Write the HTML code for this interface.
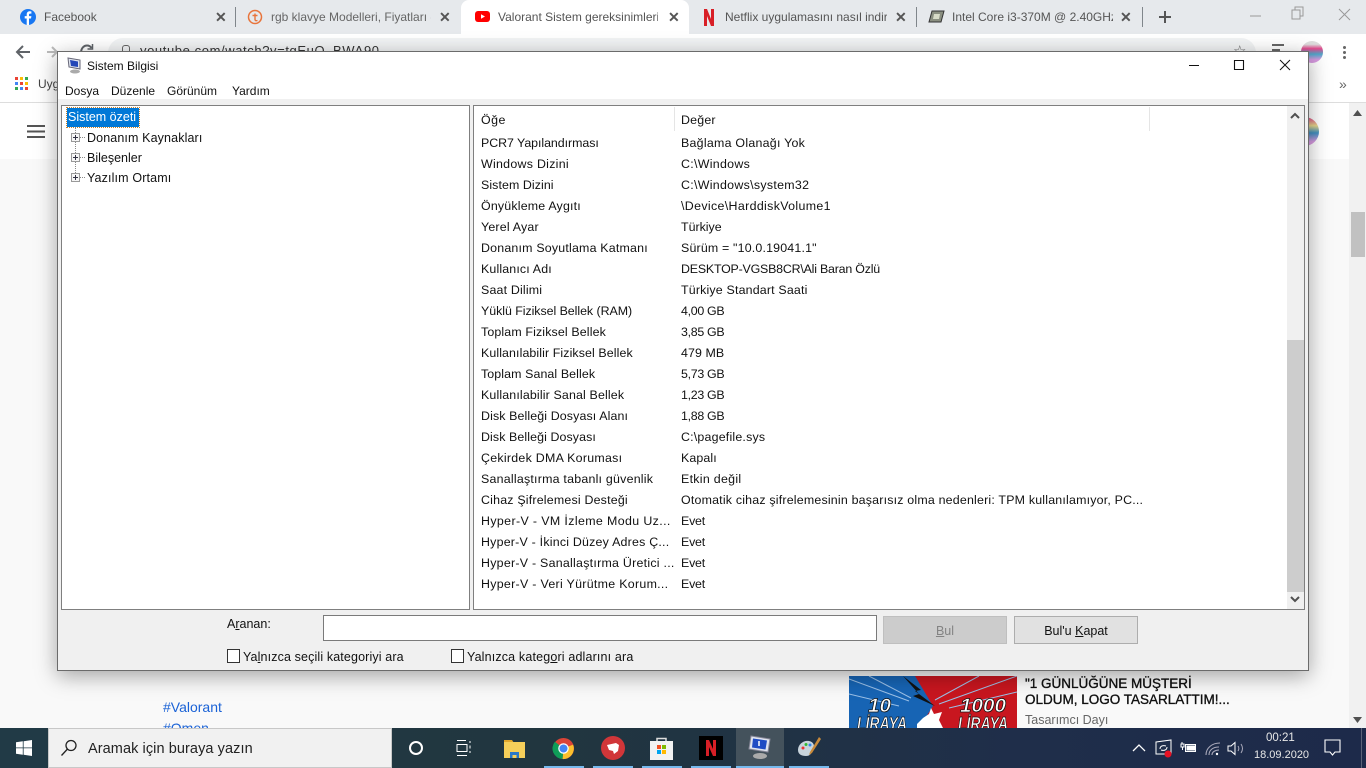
<!DOCTYPE html>
<html lang="tr"><head><meta charset="utf-8"><title>Sistem Bilgisi</title>
<style>
html,body{margin:0;padding:0;width:1366px;height:768px;overflow:hidden;background:#f9f9f9}
body{font-family:"Liberation Sans",sans-serif;font-size:12.5px;color:#111;position:relative}
.a{position:absolute;white-space:nowrap}
.t{line-height:16px}
.tab{font-size:12px;color:#555;line-height:16px}
.x{font-size:14px;color:#555;line-height:16px;font-weight:bold}
.sep{position:absolute;width:1px;height:20px;top:7px;background:#80868b}
.r{position:absolute;left:481px;margin-top:1px;line-height:16px;white-space:nowrap;font-size:12.4px;letter-spacing:.15px}
.v{position:absolute;left:681px;margin-top:1px;line-height:16px;white-space:nowrap;font-size:12.4px;letter-spacing:.2px}
.pl{position:absolute;left:71px;width:9px;height:9px;box-sizing:border-box;border:1px solid #9a9a9a;background:#f6f6f6}
.pl:before{content:"";position:absolute;left:1px;top:3px;width:5px;height:1px;background:#334}
.pl:after{content:"";position:absolute;left:3px;top:1px;width:1px;height:5px;background:#334}
u{text-decoration:underline}
</style></head><body>

<!-- Chrome -->
<div class="a" style="left:0;top:0;width:1366px;height:34px;background:#e6e9ec"></div>
<div class="a" style="left:461px;top:0;width:228px;height:34px;background:#fff;border-radius:8px 8px 0 0"></div>
<div class="a" style="left:0;top:34px;width:1366px;height:68px;background:#fff"></div>
<div class="a" style="left:0;top:102px;width:1366px;height:1px;background:#ddd"></div>
<div class="a" style="left:0;top:103px;width:1349px;height:56px;background:#fff"></div>
<div class="a" style="left:108px;top:38px;width:1148px;height:30px;border-radius:15px;background:#f1f3f4"></div>

<svg class="a" style="left:20px;top:8px" width="16" height="18" viewBox="0 0 16 18"><circle cx="8" cy="9" r="8" fill="#1877f2"/><path d="M9 17V10.500h2l.4-2.400H9V6.800c0-.8.3-1.200 1.200-1.200h1.200V3.500C11 3.400 10.300 3.300 9.700 3.300 7.900 3.300 6.700 4.400 6.700 6.500v1.600H4.700v2.400h2V17z" fill="#fff"/></svg>
<div class="a tab" style="left:44px;top:9px">Facebook</div>
<div class="a x" style="left:215px;top:9px">✕</div>
<div class="sep" style="left:235px"></div>
<svg class="a" style="left:247px;top:9px" width="16" height="16" viewBox="0 0 16 16"><circle cx="8" cy="8" r="6.500" fill="none" stroke="#e8743b" stroke-width="1.500"/><path d="M5.500 6.500h5M8 4.500v6c0 1 .8 1.500 2.500 1" fill="none" stroke="#e8743b" stroke-width="1.400"/></svg>
<div class="a tab" style="left:271px;top:9px;width:160px;overflow:hidden;color:#666">rgb klavye Modelleri, Fiyatları -</div>
<div class="a x" style="left:439px;top:9px">✕</div>
<svg class="a" style="left:475px;top:10px" width="15" height="14" viewBox="0 0 15 14"><rect x="0" y="1" width="15" height="11" rx="3" fill="#f00"/><path d="M6 4.200l4 2.300-4 2.300z" fill="#fff"/></svg>
<div class="a tab" style="left:498px;top:9px;width:160px;overflow:hidden">Valorant Sistem gereksinimleri</div>
<div class="a x" style="left:668px;top:9px">✕</div>
<svg class="a" style="left:703px;top:9px" width="12" height="17" viewBox="0 0 12 17"><path d="M1 0h3l4 10V0h3v17H8L4 7v10H1z" fill="#d81f26"/></svg>
<div class="a tab" style="left:725px;top:9px;width:162px;overflow:hidden">Netflix uygulamasını nasıl indir</div>
<div class="a x" style="left:895px;top:9px">✕</div>
<div class="sep" style="left:916px"></div>
<svg class="a" style="left:928px;top:9px" width="17" height="16" viewBox="0 0 17 16"><path d="M4 2h12l-3 11H1z" fill="#8a8f80" stroke="#333"/><path d="M6 5h6l-1 5H5z" fill="#d8dcc8"/></svg>
<div class="a tab" style="left:952px;top:9px;width:161px;overflow:hidden">Intel Core i3-370M @ 2.40GHz</div>
<div class="a x" style="left:1120px;top:9px">✕</div>
<div class="sep" style="left:1142px"></div>
<svg class="a" style="left:1158px;top:10px" width="14" height="14" viewBox="0 0 14 14"><path d="M7 1v12M1 7h12" stroke="#555" stroke-width="2"/></svg>
<svg class="a" style="left:1240px;top:3px" width="120" height="20" viewBox="0 0 120 20" fill="none" stroke="#999"><path d="M10 13h11"/><path d="M52 7h8v9h-8zM55 7V4h8v9h-3"/><path d="M99 7l11 11M110 7L99 18" transform="translate(0 -1)"/></svg>

<svg class="a" style="left:14px;top:44px" width="18" height="16" viewBox="0 0 18 16" fill="none" stroke="#5f6368" stroke-width="2"><path d="M16 8H3M9 2L3 8l6 6"/></svg>
<svg class="a" style="left:47px;top:44px" width="12" height="16" viewBox="0 0 12 16" fill="none" stroke="#bbb" stroke-width="2"><path d="M0 8h10M5 3l5 5-5 5"/></svg>
<svg class="a" style="left:79px;top:43px" width="16" height="14" viewBox="0 0 16 14" fill="none" stroke="#5f6368" stroke-width="2"><path d="M2 10C2 5 5 2.500 8 2.500c2 0 3.500 1 4.500 2.500"/><path d="M13.500 1v5h-5" stroke-width="1.500"/></svg>
<div class="a" style="left:122px;top:45px;width:6px;height:6px;border:1px solid #666;border-radius:3px 3px 0 0"></div>
<div class="a" style="left:140px;top:43px;font-size:13px;color:#333;letter-spacing:.6px">youtube.com/watch?v=tgEuQ_BWA90</div>
<div class="a" style="left:1233px;top:42px;font-size:15px;color:#666">☆</div>
<svg class="a" style="left:1272px;top:44px" width="16" height="8"><path d="M0 1h12M0 6h8" stroke="#666" stroke-width="2"/></svg>
<div class="a" style="left:1301px;top:41px;width:22px;height:22px;border-radius:50%;background:linear-gradient(180deg,#ddd 15%,#e04a8c 35%,#4fa7c9 60%,#d79ae0 85%)"></div>
<div class="a" style="left:1343px;top:46px;width:3px;height:3px;background:#666;border-radius:50%;box-shadow:0 5px #666,0 10px #666"></div>
<svg class="a" style="left:15px;top:77px" width="14" height="14"><g fill="#ea4335"><rect width="3" height="3"/><rect x="5" width="3" height="3" fill="#fbbc04"/><rect x="10" width="3" height="3" fill="#34a853"/><rect y="5" width="3" height="3" fill="#4285f4"/><rect x="5" y="5" width="3" height="3"/><rect x="10" y="5" width="3" height="3" fill="#fbbc04"/><rect y="10" width="3" height="3" fill="#34a853"/><rect x="5" y="10" width="3" height="3" fill="#4285f4"/><rect x="10" y="10" width="3" height="3"/></g></svg>
<div class="a" style="left:38px;top:77px;font-size:12px;color:#444">Uygulamalar</div>
<div class="a" style="left:1339px;top:76px;font-size:14px;color:#666">»</div>
<svg class="a" style="left:27px;top:125px" width="18" height="13"><path d="M0 1h18M0 6.500h18M0 12h18" stroke="#555" stroke-width="2"/></svg>
<div class="a" style="left:1298px;top:117px;width:21px;height:29px;border-radius:0 15px 15px 0;background:linear-gradient(180deg,#e04a8c,#e8d88c 30%,#3f8fc0 55%,#d79ae0 85%)"></div>

<!-- page scrollbar -->
<div class="a" style="left:1349px;top:103px;width:17px;height:625px;background:#f1f1f1"></div>
<div class="a" style="left:1351px;top:212px;width:14px;height:45px;background:#c1c1c1"></div>
<svg class="a" style="left:1353px;top:110px" width="9" height="6"><path d="M4.500 0L9 6H0z" fill="#505050"/></svg>
<svg class="a" style="left:1353px;top:717px" width="9" height="6"><path d="M4.500 6L9 0H0z" fill="#505050"/></svg>

<!-- page content under window -->
<div class="a" style="left:163px;top:699px;font-size:14px;color:#1a62d6">#Valorant</div>
<div class="a" style="left:163px;top:720px;font-size:14px;color:#1a62d6">#Omen</div>
<svg class="a" style="left:849px;top:676px" width="168" height="52" viewBox="0 0 168 52"><rect width="168" height="52" fill="#c8161f"/><path d="M0 0H66L84 30 70 52H0z" fill="#1764b4"/><path d="M0 3L60 25M0 18L50 30M20 0L62 22M168 0L90 28M168 16L100 32M130 0L86 24" stroke="#9cc0e6" stroke-width="1"/><path d="M54 0L72 14 66 15 86 30 64 20 70 18z" fill="#111"/><path d="M68 48l6-6 6-4 2-6 3 6 8-2-3 8 4 8H68z" fill="#fff"/><text x="19" y="36" font-family="Liberation Sans" font-size="19" font-weight="bold" font-style="italic" fill="#fff" stroke="#111" stroke-width=".7" textLength="23" lengthAdjust="spacingAndGlyphs">10</text><text x="111" y="36" font-family="Liberation Sans" font-size="19" font-weight="bold" font-style="italic" fill="#fff" stroke="#111" stroke-width=".7" textLength="46" lengthAdjust="spacingAndGlyphs">1000</text><text x="8" y="54" font-family="Liberation Sans" font-size="18" font-weight="bold" font-style="italic" fill="#fff" stroke="#111" stroke-width=".7" textLength="50" lengthAdjust="spacingAndGlyphs">LİRAYA</text><text x="109" y="54" font-family="Liberation Sans" font-size="18" font-weight="bold" font-style="italic" fill="#fff" stroke="#111" stroke-width=".7" textLength="50" lengthAdjust="spacingAndGlyphs">LİRAYA</text></svg>
<div class="a" style="left:1025px;top:676px;font-size:13.500px;line-height:16px;color:#111;-webkit-text-stroke:.35px #111">"1 GÜNLÜĞÜNE MÜŞTERİ<br>OLDUM, LOGO TASARLATTIM!...</div>
<div class="a" style="left:1025px;top:713px;font-size:12.500px;color:#666">Tasarımcı Dayı</div>

<!-- Window -->
<div class="a" style="left:57px;top:51px;width:1250px;height:618px;background:#f0f0f0;border:1px solid #6b6b6b;box-shadow:0 5px 20px rgba(0,0,0,.35)"></div>
<div class="a" style="left:58px;top:52px;width:1250px;height:47px;background:#fff"></div>
<svg class="a" style="left:66px;top:57px" width="17" height="17" viewBox="0 0 17 17"><path d="M2 1l12 2v9L3 10z" fill="#dfe4ee" stroke="#667"/><path d="M4 3l8 1.500v5.500L5 9z" fill="#2447b8"/><ellipse cx="9" cy="14.500" rx="5" ry="2" fill="#aaa"/></svg>
<div class="a t" style="left:87px;top:58px;font-size:12px">Sistem Bilgisi</div>
<svg class="a" style="left:1180px;top:55px" width="115" height="20" viewBox="0 0 115 20" fill="none" stroke="#111"><path d="M9 10.500h10"/><path d="M54.500 5.500h9v9h-9z" stroke-width="1.100"/><path d="M100 5l10 10M110 5l-10 10"/></svg>
<div class="a t" style="left:65px;top:83px;font-size:12px">Dosya</div>
<div class="a t" style="left:111px;top:83px;font-size:12px">Düzenle</div>
<div class="a t" style="left:167px;top:83px;font-size:12px">Görünüm</div>
<div class="a t" style="left:232px;top:83px;font-size:12px">Yardım</div>

<!-- Tree panel -->
<div class="a" style="left:61px;top:105px;width:407px;height:503px;background:#fff;border:1px solid #7f7f7f"></div>
<div class="a t" style="left:67px;top:108px;width:71px;height:19px;line-height:19px;background:#0078d7;color:#fff;outline:1px dotted #c9812a;padding-left:1px;font-size:12.500px">Sistem özeti</div>
<div class="a" style="left:75px;top:127px;height:50px;border-left:1px dotted #888"></div>
<div class="a" style="left:80px;top:137px;width:5px;border-top:1px dotted #888"></div>
<div class="a" style="left:80px;top:157px;width:5px;border-top:1px dotted #888"></div>
<div class="a" style="left:80px;top:177px;width:5px;border-top:1px dotted #888"></div>
<div class="pl" style="top:133px"></div><div class="pl" style="top:153px"></div><div class="pl" style="top:173px"></div>
<div class="a t" style="left:87px;top:130px;letter-spacing:.12px">Donanım Kaynakları</div>
<div class="a t" style="left:87px;top:150px">Bileşenler</div>
<div class="a t" style="left:87px;top:170px;letter-spacing:.14px">Yazılım Ortamı</div>

<!-- List panel -->
<div class="a" style="left:473px;top:105px;width:830px;height:503px;background:#fff;border:1px solid #7f7f7f"></div>
<div class="a" style="left:674px;top:107px;width:1px;height:24px;background:#e5e5e5"></div>
<div class="a" style="left:1149px;top:107px;width:1px;height:24px;background:#e5e5e5"></div>
<div class="a" style="left:1287px;top:106px;width:17px;height:503px;background:#f0f0f0"></div>
<div class="a" style="left:1287px;top:340px;width:17px;height:252px;background:#cdcdcd"></div>
<svg class="a" style="left:1290px;top:112px" width="10" height="7" fill="none" stroke="#505050" stroke-width="2"><path d="M1 6l4-4 4 4"/></svg>
<svg class="a" style="left:1290px;top:596px" width="10" height="7" fill="none" stroke="#505050" stroke-width="2"><path d="M1 1l4 4 4-4"/></svg>
<div class="r" style="top:111px;letter-spacing:.5px">Öğe</div><div class="v" style="top:111px">Değer</div>
<div class="r" style="top:134px;letter-spacing:-.05px">PCR7 Yapılandırması</div><div class="v" style="top:134px;letter-spacing:.26px">Bağlama Olanağı Yok</div>
<div class="r" style="top:155px;letter-spacing:.28px">Windows Dizini</div><div class="v" style="top:155px;letter-spacing:.3px">C:\Windows</div>
<div class="r" style="top:176px;letter-spacing:.08px">Sistem Dizini</div><div class="v" style="top:176px;letter-spacing:.3px">C:\Windows\system32</div>
<div class="r" style="top:197px;letter-spacing:.19px">Önyükleme Aygıtı</div><div class="v" style="top:197px;letter-spacing:.35px">\Device\HarddiskVolume1</div>
<div class="r" style="top:218px;letter-spacing:.2px">Yerel Ayar</div><div class="v" style="top:218px;letter-spacing:0">Türkiye</div>
<div class="r" style="top:239px;letter-spacing:.2px">Donanım Soyutlama Katmanı</div><div class="v" style="top:239px;letter-spacing:.18px">Sürüm = "10.0.19041.1"</div>
<div class="r" style="top:260px">Kullanıcı Adı</div><div class="v" style="top:260px;letter-spacing:-.2px">DESKTOP-VGSB8CR\Ali Baran Özlü</div>
<div class="r" style="top:281px;letter-spacing:.18px">Saat Dilimi</div><div class="v" style="top:281px;letter-spacing:.18px">Türkiye Standart Saati</div>
<div class="r" style="top:302px;letter-spacing:-.04px">Yüklü Fiziksel Bellek (RAM)</div><div class="v" style="top:302px;letter-spacing:-.3px">4,00 GB</div>
<div class="r" style="top:323px;letter-spacing:.14px">Toplam Fiziksel Bellek</div><div class="v" style="top:323px;letter-spacing:-.3px">3,85 GB</div>
<div class="r" style="top:344px;letter-spacing:.1px">Kullanılabilir Fiziksel Bellek</div><div class="v" style="top:344px;letter-spacing:.1px">479 MB</div>
<div class="r" style="top:365px;letter-spacing:.1px">Toplam Sanal Bellek</div><div class="v" style="top:365px;letter-spacing:-.3px">5,73 GB</div>
<div class="r" style="top:386px">Kullanılabilir Sanal Bellek</div><div class="v" style="top:386px;letter-spacing:-.3px">1,23 GB</div>
<div class="r" style="top:407px;letter-spacing:.12px">Disk Belleği Dosyası Alanı</div><div class="v" style="top:407px;letter-spacing:-.3px">1,88 GB</div>
<div class="r" style="top:428px;letter-spacing:.1px">Disk Belleği Dosyası</div><div class="v" style="top:428px">C:\pagefile.sys</div>
<div class="r" style="top:449px;letter-spacing:.27px">Çekirdek DMA Koruması</div><div class="v" style="top:449px;letter-spacing:.1px">Kapalı</div>
<div class="r" style="top:470px;letter-spacing:.23px">Sanallaştırma tabanlı güvenlik</div><div class="v" style="top:470px;letter-spacing:.3px">Etkin değil</div>
<div class="r" style="top:491px;letter-spacing:.2px">Cihaz Şifrelemesi Desteği</div><div class="v" style="top:491px">Otomatik cihaz şifrelemesinin başarısız olma nedenleri: TPM kullanılamıyor, PC...</div>
<div class="r" style="top:512px;letter-spacing:.38px">Hyper-V - VM İzleme Modu Uz...</div><div class="v" style="top:512px;letter-spacing:-.2px">Evet</div>
<div class="r" style="top:533px;letter-spacing:.22px">Hyper-V - İkinci Düzey Adres Ç...</div><div class="v" style="top:533px;letter-spacing:-.2px">Evet</div>
<div class="r" style="top:554px;letter-spacing:.26px">Hyper-V - Sanallaştırma Üretici ...</div><div class="v" style="top:554px;letter-spacing:-.2px">Evet</div>
<div class="r" style="top:575px;letter-spacing:.3px">Hyper-V - Veri Yürütme Korum...</div><div class="v" style="top:575px;letter-spacing:-.2px">Evet</div>

<!-- Search -->
<div class="a t" style="left:227px;top:616px">A<u>r</u>anan:</div>
<div class="a" style="left:323px;top:615px;width:552px;height:24px;background:#fff;border:1px solid #7a7a7a"></div>
<div class="a" style="left:883px;top:616px;width:122px;height:26px;background:#ccc;border:1px solid #bfbfbf;text-align:center;line-height:28px;color:#838383"><u>B</u>ul</div>
<div class="a" style="left:1014px;top:616px;width:122px;height:26px;background:#e1e1e1;border:1px solid #adadad;text-align:center;line-height:28px">Bul'u <u>K</u>apat</div>
<div class="a" style="left:227px;top:649px;width:11px;height:12px;background:#fff;border:1px solid #333"></div>
<div class="a t" style="left:243px;top:649px;letter-spacing:.13px">Ya<u>l</u>nızca seçili kategoriyi ara</div>
<div class="a" style="left:451px;top:649px;width:11px;height:12px;background:#fff;border:1px solid #333"></div>
<div class="a t" style="left:467px;top:649px;letter-spacing:.16px">Yalnızca kateg<u>o</u>ri adlarını ara</div>

<!-- Taskbar -->
<div class="a" style="left:0;top:728px;width:1366px;height:40px;background:linear-gradient(90deg,#213a46 0%,#21363f 40%,#1f2e4a 75%,#1d2a4a 100%)"></div>
<svg class="a" style="left:16px;top:740px" width="16" height="16" viewBox="0 0 16 16" fill="#fff"><path d="M0 2.300l6.800-1V7.500H0zM7.600 1.200L16 0V7.500H7.600zM0 8.300h6.800v6.400l-6.800-1zM7.600 8.300H16V16L7.600 14.800z"/></svg>
<div class="a" style="left:48px;top:728px;width:344px;height:40px;box-sizing:border-box;background:#f1f1f1;border:1px solid #c8c8c8"></div>
<svg class="a" style="left:60px;top:739px" width="18" height="18" viewBox="0 0 18 18" fill="none" stroke="#222" stroke-width="1.300"><circle cx="11" cy="6.500" r="5"/><path d="M7.500 10L1.500 16.500"/></svg>
<div class="a" style="left:88px;top:741px;font-size:14.500px;color:#222;letter-spacing:.08px">Aramak için buraya yazın</div>
<div class="a" style="left:409px;top:741px;width:10px;height:10px;border:2px solid #fff;border-radius:50%"></div>
<svg class="a" style="left:455px;top:740px" width="17" height="16" fill="none" stroke="#fff"><path d="M2 .5h9M2 4.500h10v7H2zM2 15.500h10M15 1v2M15 5.500v3M15 11v2"/></svg>
<svg class="a" style="left:504px;top:739px" width="21" height="19" viewBox="0 0 21 19"><path d="M0 1h8l2 3H0z" fill="#e2a72c"/><rect y="3" width="21" height="16" fill="#f6cf5a"/><path d="M6 19v-6h9v6h-2.500v-3h-4v3z" fill="#2a78c8"/></svg>
<svg class="a" style="left:552px;top:737px" width="23" height="23" viewBox="0 0 24 24"><circle cx="12" cy="12" r="11" fill="#db4437"/><path d="M12 12L22 8A11 11 0 0 1 11 23z" fill="#fbc02d"/><path d="M12 12L11 23A11 11 0 0 1 3 5z" fill="#0f9d58"/><circle cx="12" cy="12" r="5.500" fill="#fff"/><circle cx="12" cy="12" r="4.200" fill="#4285f4"/></svg>
<svg class="a" style="left:601px;top:736px" width="24" height="24" viewBox="0 0 24 24"><circle cx="12" cy="12" r="12" fill="#d13639"/><path d="M6 9l9-2 3 2-1 6-4 3-1-3-4-1z" fill="#fff"/></svg>
<svg class="a" style="left:650px;top:736px" width="23" height="24" viewBox="0 0 23 24"><path d="M7 6V2.500h9V6" fill="none" stroke="#ddd" stroke-width="1.500"/><rect y="5" width="23" height="19" fill="#f2f2f2"/><rect x="7" y="9" width="4" height="4" fill="#f25022"/><rect x="12" y="9" width="4" height="4" fill="#7fba00"/><rect x="7" y="14" width="4" height="4" fill="#00a4ef"/><rect x="12" y="14" width="4" height="4" fill="#ffb900"/></svg>
<div class="a" style="left:699px;top:736px;width:24px;height:24px;background:#000"></div>
<svg class="a" style="left:706px;top:740px" width="10" height="16" viewBox="0 0 10 16"><path d="M0 0h3l4 9V0h3v16H7L3 7v9H0z" fill="#d81f26"/></svg>
<div class="a" style="left:736px;top:728px;width:48px;height:40px;background:#44525c"></div>
<svg class="a" style="left:748px;top:735px" width="24" height="25" viewBox="0 0 24 25"><path d="M3 1l19 3-2 13L1 14z" fill="#dfe4ee" stroke="#889"/><path d="M5 3.500l14 2-1.500 9L4 12.500z" fill="#1f4cc4"/><path d="M11 6v5" stroke="#fff" stroke-width="1.500"/><ellipse cx="12" cy="21" rx="7" ry="3" fill="#aaa"/></svg>
<svg class="a" style="left:797px;top:736px" width="24" height="24" viewBox="0 0 24 24"><path d="M1 14c0-6 6-10 11-9 5 1 6 5 4 9-2 4-3 6-7 6-5 0-8-2-8-6z" fill="#c8d4dc"/><circle cx="6" cy="12" r="1.500" fill="#e33"/><circle cx="9" cy="8.500" r="1.500" fill="#3b3"/><circle cx="13" cy="9" r="1.500" fill="#38e"/><path d="M22 1l-9 15-1 3 3-2 9-14z" fill="#c98a3a"/></svg>
<div class="a" style="left:544px;top:766px;width:40px;height:2px;background:#76b9ed"></div>
<div class="a" style="left:593px;top:766px;width:40px;height:2px;background:#76b9ed"></div>
<div class="a" style="left:642px;top:766px;width:40px;height:2px;background:#76b9ed"></div>
<div class="a" style="left:691px;top:766px;width:40px;height:2px;background:#76b9ed"></div>
<div class="a" style="left:736px;top:766px;width:48px;height:2px;background:#76b9ed"></div>
<div class="a" style="left:789px;top:766px;width:40px;height:2px;background:#76b9ed"></div>

<svg class="a" style="left:1132px;top:743px" width="14" height="9" fill="none" stroke="#fff" stroke-width="1.300"><path d="M1 8l6-6 6 6"/></svg>
<svg class="a" style="left:1155px;top:739px" width="20" height="20" viewBox="0 0 20 20"><path d="M1 3l15-2v14H1z" fill="#1f2e4a" stroke="#fff"/><path d="M5 10c0-3 3-4 6-3M12 8c0 3-3 4-6 3" stroke="#fff" fill="none"/><circle cx="13" cy="15" r="3.500" fill="#e81123"/></svg>
<svg class="a" style="left:1180px;top:741px" width="17" height="13" fill="none" stroke="#fff"><path d="M1 3v3h3V3zM2 1v2M2.500 6v3"/><rect x="5.500" y="3.500" width="10" height="7"/><rect x="7" y="5" width="8" height="4" fill="#fff"/></svg>
<svg class="a" style="left:1205px;top:741px" width="16" height="16" fill="none" stroke="#aab" stroke-width="1.100"><path d="M1 14C1 7 7 2 15 2M4 14c0-5 4-8 10-8M7 14c0-3 3-5 7-5"/><circle cx="12" cy="13" r="1.200" fill="#fff" stroke="none"/></svg>
<svg class="a" style="left:1227px;top:741px" width="18" height="15" fill="none" stroke="#fff"><path d="M1 5h3l4-3.500v12L4 10H1z"/><path d="M11 5c1 1.500 1 3.500 0 5M14 3c2 3 2 6 0 9" stroke="#aab"/></svg>
<div class="a" style="left:1266px;top:732px;font-size:11.500px;color:#e8e8e8">00:21</div>
<div class="a" style="left:1254px;top:749px;font-size:11px;color:#e8e8e8;line-height:13px">18.09.2020</div>
<svg class="a" style="left:1324px;top:739px" width="18" height="18" fill="none" stroke="#fff" stroke-width="1.100"><path d="M1 1h15v12h-5l-2.500 3L6 13H1z"/></svg>
<div class="a" style="left:1361px;top:728px;width:1px;height:40px;background:#5a6378"></div>
</body></html>
